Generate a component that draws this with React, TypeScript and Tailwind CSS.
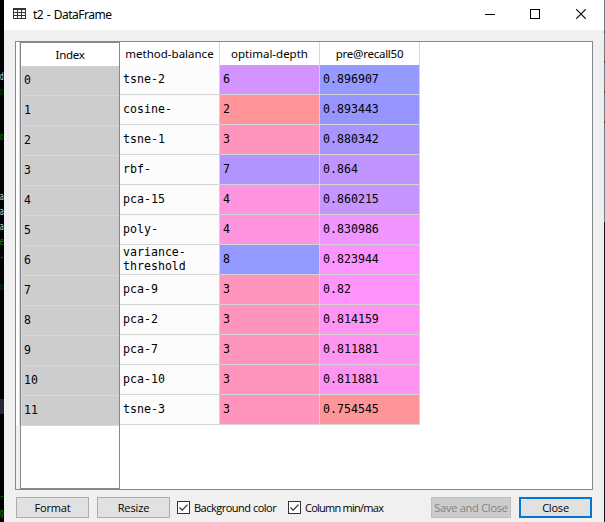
type Row = { method: string; depth: number; depthBg: string; score: string; scoreBg: string };

const rows: Row[] = [
  { method: 'tsne-2', depth: 6, depthBg: 'bg-[#d494ff]', score: '0.896907', scoreBg: 'bg-[#949aff]' },
  { method: 'cosine-', depth: 2, depthBg: 'bg-[#ff9499]', score: '0.893443', scoreBg: 'bg-[#9694ff]' },
  { method: 'tsne-1', depth: 3, depthBg: 'bg-[#ff94bc]', score: '0.880342', scoreBg: 'bg-[#a794ff]' },
  { method: 'rbf-', depth: 7, depthBg: 'bg-[#b294ff]', score: '0.864', scoreBg: 'bg-[#c094ff]' },
  { method: 'pca-15', depth: 4, depthBg: 'bg-[#ff94de]', score: '0.860215', scoreBg: 'bg-[#c594ff]' },
  { method: 'poly-', depth: 4, depthBg: 'bg-[#ff94de]', score: '0.830986', scoreBg: 'bg-[#f094ff]' },
  { method: 'variance-threshold', depth: 8, depthBg: 'bg-[#9499ff]', score: '0.823944', scoreBg: 'bg-[#fb94ff]' },
  { method: 'pca-9', depth: 3, depthBg: 'bg-[#ff94bc]', score: '0.82', scoreBg: 'bg-[#ff94fd]' },
  { method: 'pca-2', depth: 3, depthBg: 'bg-[#ff94bc]', score: '0.814159', scoreBg: 'bg-[#ff94f3]' },
  { method: 'pca-7', depth: 3, depthBg: 'bg-[#ff94bc]', score: '0.811881', scoreBg: 'bg-[#ff94f0]' },
  { method: 'pca-10', depth: 3, depthBg: 'bg-[#ff94bc]', score: '0.811881', scoreBg: 'bg-[#ff94f0]' },
  { method: 'tsne-3', depth: 3, depthBg: 'bg-[#ff94bc]', score: '0.754545', scoreBg: 'bg-[#ff9499]' },
];

const cell = 'flex h-[30px] w-[100px] items-center border-r border-b border-[#d4d4d4] pb-px pl-[3px] leading-[14px]';
const head = 'flex h-[23px] w-[100px] items-center justify-center border-r border-[#d8d8d8] pt-px whitespace-nowrap';
const button = 'flex h-[21px] items-center justify-center border whitespace-nowrap pt-px';
const glyph = 'absolute right-0 origin-right scale-x-[0.6]';

function TitleBar() {
  return (
    <header className="flex h-[30px] shrink-0 items-center bg-white pl-[9px]">
      <svg width="13" height="11" viewBox="0 0 13 11" className="mb-[3px] shrink-0" shapeRendering="crispEdges">
        <rect width="13" height="11" rx="1" fill="#343434" />
        {[2, 5, 8].map((y) =>
          [1, 5, 9].map((x) => <rect key={`${x}-${y}`} x={x} y={y} width="3" height="2" fill="#fff" />),
        )}
      </svg>
      <h1 className="ml-[7px] text-[12px] leading-[16px] tracking-[-0.5px] [word-spacing:1px] whitespace-nowrap">t2 - DataFrame</h1>
      <div className="mr-[18px] mb-[2px] ml-auto flex items-center gap-[35px]">
        <svg width="10" height="10" shapeRendering="crispEdges"><path d="M0 5.5H10" stroke="#000" /></svg>
        <svg width="10" height="10" shapeRendering="crispEdges"><rect x=".5" y=".5" width="9" height="9" fill="none" stroke="#000" /></svg>
        <svg width="10" height="10" className="ml-px"><path d="M.2.2 9.8 9.8M9.8.2.2 9.8" fill="none" stroke="#000" strokeWidth="1.1" /></svg>
      </div>
    </header>
  );
}

function IndexColumn() {
  return (
    <div className="h-[447px] w-[100px] shrink-0 border border-[#828790] bg-white">
      <div className="flex h-[23px] items-center justify-center text-[11.5px] tracking-[-0.3px]">Index</div>
      {rows.map((r, i) => (
        <div key={r.method} className="flex h-[30px] items-center border-b border-l border-[#d8d8d8] bg-[#cdcdcd] pl-[2px] font-['DejaVu_Sans_Mono',monospace] text-[11.5px]">
          {i}
        </div>
      ))}
    </div>
  );
}

function DataTable() {
  return (
    <div className="w-[300px]">
      <div className="flex text-[11.5px]">
        <div className={head}>method-balance</div>
        <div className={head}>optimal-depth</div>
        <div className={`${head} tracking-[-0.25px]`}>pre@recall50</div>
      </div>
      {rows.map((r) => (
        <div key={r.method} className="flex font-['DejaVu_Sans_Mono',monospace] text-[11.6px]">
          <div className={`${cell} bg-[#fcfcfc]`}>{r.method}</div>
          <div className={`${cell} ${r.depthBg}`}>{r.depth}</div>
          <div className={`${cell} ${r.scoreBg}`}>{r.score}</div>
        </div>
      ))}
    </div>
  );
}

function CheckOption({ label }: { label: string }) {
  return (
    <label className="flex items-center gap-1 whitespace-nowrap">
      <svg width="13" height="13" className="shrink-0">
        <rect x=".5" y=".5" width="12" height="12" fill="#fff" stroke="#333" />
        <path d="m2.5 6.5 2.7 2.7 5.3-5.5" fill="none" stroke="#333" strokeWidth="1.2" />
      </svg>
      <span className="pt-px">{label}</span>
    </label>
  );
}

export default function App() {
  return (
    <main className="flex h-[522px] w-[605px] overflow-hidden bg-black font-['Noto_Sans',sans-serif] text-[11px] text-black">
      <aside className="relative w-1 shrink-0 bg-black font-['DejaVu_Sans_Mono',monospace] text-[11px] leading-[15px]">
        <span className={`${glyph} top-[69px] text-[#ccc]`}>d</span>
        <span className={`${glyph} top-[84px] text-[#084d08]`}>o</span>
        <span className={`${glyph} top-[129px] text-[#0a8a0a]`}>o</span>
        <span className={`${glyph} top-[189px] text-[#ccc]`}>a<br />a<br />a</span>
        <span className={`${glyph} top-[234px] text-[#0a8a0a]`}>e<br />-</span>
        <span className={`${glyph} top-[279px] text-[#084d08]`}>o</span>
        <span className="absolute top-[399px] right-0 h-[15px] w-1 bg-[#24243a]" />
        <span className={`${glyph} top-[488px] text-[#0a8a0a]`}>-</span>
        <span className={`${glyph} top-[505px] text-[#0a8a0a]`}>g</span>
      </aside>
      <section className="flex w-[600px] shrink-0 flex-col bg-[#f0f0f0]">
        <TitleBar />
        <div className="mt-[11px] ml-[11px] flex h-[449px] w-[578px] shrink-0 border border-[#828790] bg-white">
          <div className="flex w-1 flex-col">
            <div className="h-[383px] w-1 border-r border-[#d8d8d8] bg-white" />
            <div className="w-1 flex-1 bg-[#f0f0f0]" />
          </div>
          <IndexColumn />
          <DataTable />
        </div>
        <footer className="mt-[7px] ml-3 flex h-[21px] items-center font-['Open_Sans','Noto_Sans',sans-serif] tracking-[-0.25px]">
          <button className={`${button} w-[73px] border-[#adadad] bg-[#e1e1e1] tracking-[-0.2px]`}>Format</button>
          <button className={`${button} ml-2 w-[73px] border-[#adadad] bg-[#e1e1e1] tracking-[-0.1px]`}>Resize</button>
          <div className="ml-[7px] w-[111px] tracking-[-0.5px]"><CheckOption label="Background color" /></div>
          <div className="tracking-[-0.75px]"><CheckOption label="Column min/max" /></div>
          <div className="mr-3 ml-auto flex gap-2">
            <button className={`${button} w-[80px] border-[#bfbfbf] bg-[#cccccc] text-[#838383]`}>Save and Close</button>
            <button className="flex h-[21px] w-[73px] items-center justify-center border-2 border-[#0078d7] bg-[#e1e1e1] pt-px tracking-[-0.2px]">Close</button>
          </div>
        </footer>
      </section>
      <div className="flex w-px shrink-0 flex-col bg-[#707b87]">
        <div className="mt-[31px] flex flex-col gap-[28px]">
          <i className="h-[2px] bg-[#664018]" /><i className="h-[2px] bg-[#664018]" />
          <i className="h-[2px] bg-[#664018]" /><i className="h-[2px] bg-[#664018]" />
        </div>
        <div className="mt-[99px] flex-1 bg-[#11131f]" />
      </div>
    </main>
  );
}
